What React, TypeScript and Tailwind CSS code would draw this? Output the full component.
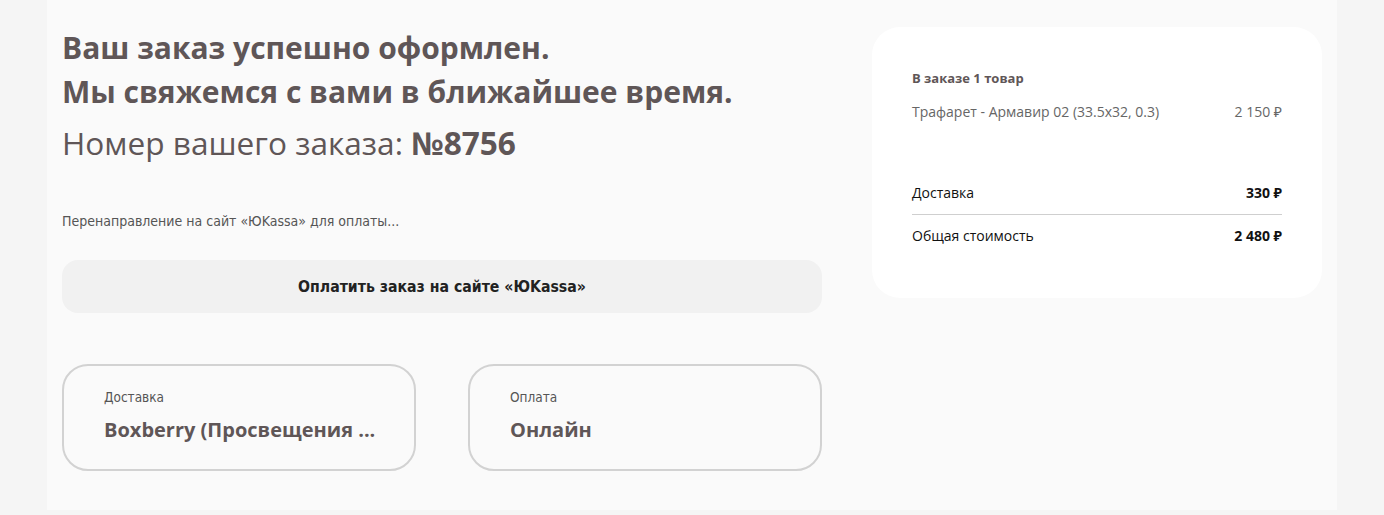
import React from "react";

const open = { fontFamily: '"Open Sans", "Noto Sans", sans-serif' } as const;
const narrow = { fontFamily: '"Liberation Sans Narrow", "DejaVu Sans Condensed", Roboto, sans-serif' } as const;

export default function App() {
  return (
    <div className="min-h-[515px] w-full bg-[#f5f5f5]" style={open}>
      <div className="mx-auto flex w-[1290px] gap-[50px] bg-[#fafafa] px-[15px] pb-[39px] pt-[26px]">
        <div className="flex w-[760px] flex-col">
          <h1 className="text-[30px] font-bold leading-[44px] text-[#5f5657]">
            Ваш заказ успешно оформлен.
            <br />
            Мы свяжемся с вами в ближайшее время.
          </h1>
          <div className="mt-[9px] text-[31.6px] leading-[40px] text-[#5f5657]">
            Номер вашего заказа: <span className="font-bold">№8756</span>
          </div>
          <p className="mt-[48px] text-[14px] leading-[20px] text-[#555]" style={narrow}>
            Перенаправление на сайт «ЮKassa» для оплаты...
          </p>
          <button
            className="mt-[29px] flex h-[53px] w-full items-center justify-center rounded-[16px] bg-[#f1f1f1] text-[15.7px] font-bold text-[#222]"
            style={narrow}
          >
            Оплатить заказ на сайте «ЮKassa»
          </button>
          <div className="mt-[51px] flex gap-[52px]">
            <div className="flex h-[107px] w-[354px] flex-col rounded-[26px] border-2 border-[#d2d2d2] px-[40px] pt-[22px]">
              <span className="text-[13.5px] leading-[18px] text-[#555]" style={narrow}>Доставка</span>
              <span className="mt-[10px] whitespace-nowrap text-[20px] font-bold leading-[28px] text-[#5f5657]">
                Boxberry (Просвещения ...
              </span>
            </div>
            <div className="flex h-[107px] w-[354px] flex-col rounded-[26px] border-2 border-[#d2d2d2] px-[40px] pt-[22px]">
              <span className="text-[13.5px] leading-[18px] text-[#555]" style={narrow}>Оплата</span>
              <span className="mt-[10px] whitespace-nowrap text-[20px] font-bold leading-[28px] text-[#5f5657]">Онлайн</span>
            </div>
          </div>
        </div>
        <div className="mt-[1px] flex h-[271px] w-[450px] flex-col rounded-[28px] bg-white px-[40px] pt-[40px]">
          <div className="text-[13px] font-bold leading-[22px] text-[#5f5657]">В заказе 1 товар</div>
          <div className="mt-[12px] flex justify-between text-[14px] leading-[22px] text-[#666]">
            <span>Трафарет - Армавир 02 (33.5x32, 0.3)</span>
            <span>2 150 ₽</span>
          </div>
          <div className="mt-[59px] flex justify-between text-[14px] leading-[22px] text-[#111]">
            <span>Доставка</span>
            <span className="font-bold">330 ₽</span>
          </div>
          <div className="mt-[10px] h-px bg-[#cfcfcf]" />
          <div className="mt-[10px] flex justify-between text-[14px] leading-[22px] text-[#111]">
            <span>Общая стоимость</span>
            <span className="font-bold">2 480 ₽</span>
          </div>
        </div>
      </div>
    </div>
  );
}
